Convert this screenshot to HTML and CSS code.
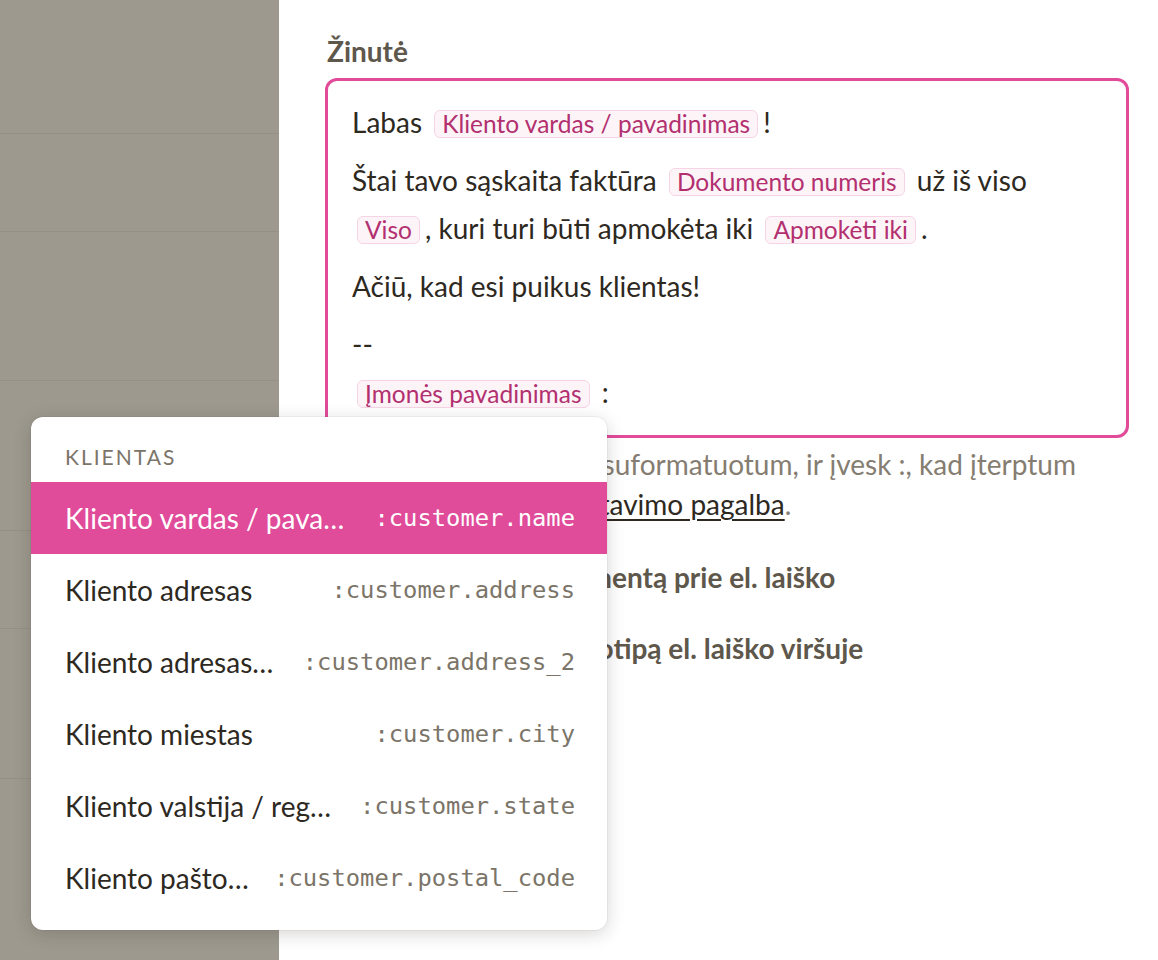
FILE: index.html
```html
<!DOCTYPE html>
<html lang="lt">
<head>
<meta charset="utf-8">
<title>Žinutė</title>
<link rel="stylesheet" href="styles.css">
</head>
<body>
<div class="app">
  <aside class="sidebar">
    <div class="side-row r1"></div>
    <div class="side-row r2"></div>
    <div class="side-row r3"></div>
    <div class="side-row r4"></div>
    <div class="side-row r5"></div>
    <div class="side-row r6"></div>
    <div class="side-row r7"></div>
  </aside>
  <main class="content">
    <h2 class="field-label">Žinutė</h2>
    <div class="editor">
      <p>Labas <span class="tok">Kliento vardas / pavadinimas</span>!</p>
      <p>Štai tavo sąskaita faktūra <span class="tok">Dokumento numeris</span> už iš viso <span class="tok">Viso</span>, kuri turi būti apmokėta iki <span class="tok">Apmokėti iki</span>.</p>
      <p>Ačiū, kad esi puikus klientas!</p>
      <p>--<br><span class="tok">Įmonės pavadinimas</span> :</p>
    </div>
    <p class="help">Rašyk Markdown, kad suformatuotum, ir įvesk :, kad įterptum laukus. Daugiau <a href="#" class="help-link">formatavimo pagalba</a>.</p>
    <label class="check"><span class="box"></span><span>Pridėti PDF dokumentą prie el. laiško</span></label>
    <label class="check"><span class="box"></span><span>Rodyti įmonės logotipą el. laiško viršuje</span></label>
  </main>
</div>

<div class="menu">
  <div class="menu-head">Klientas</div>
  <div class="menu-item active"><span class="mi-label">Kliento vardas / pavadinimas</span><span class="mi-code">:customer.name</span></div>
  <div class="menu-item"><span class="mi-label">Kliento adresas</span><span class="mi-code">:customer.address</span></div>
  <div class="menu-item"><span class="mi-label">Kliento adresas, 2 eilutė</span><span class="mi-code">:customer.address_2</span></div>
  <div class="menu-item"><span class="mi-label">Kliento miestas</span><span class="mi-code">:customer.city</span></div>
  <div class="menu-item"><span class="mi-label">Kliento valstija / regionas</span><span class="mi-code">:customer.state</span></div>
  <div class="menu-item"><span class="mi-label">Kliento pašto kodas</span><span class="mi-code">:customer.postal_code</span></div>
</div>
</body>
</html>
```
FILE: styles.css
```css
* { box-sizing: border-box; }
html, body { margin: 0; padding: 0; }
body {
  font-family: Lato, "Noto Sans", sans-serif;
  color: #2e291f;
  background: #fff;
  width: 1158px;
  height: 960px;
  overflow: hidden;
  position: relative;
}
.app {
  display: flex;
  height: 960px;
}
.sidebar {
  width: 279px;
  flex: none;
  background: #9d998e;
  display: flex;
  flex-direction: column;
}
.side-row { border-bottom: 1px solid #959085; flex: none; }
.r1 { height: 134px; }
.r2 { height: 98px; }
.r3 { height: 149px; }
.r4 { height: 150px; }
.r5 { height: 98px; }
.r6 { height: 150px; }
.r7 { flex: 1; border-bottom: 0; }

.content {
  flex: 1;
  padding: 34px 29px 0 46px;
}
.field-label {
  margin: 0 0 10px 2px;
  font-size: 28px;
  line-height: 34px;
  font-weight: 700;
  color: #5e574b;
}
.editor {
  border: 3px solid #e14b9a;
  border-radius: 12px;
  padding: 17px 20px 19px 24px;
  font-size: 28px;
}
.editor p {
  margin: 0 0 10px;
  line-height: 48px;
}
.editor p:last-child { margin-bottom: 0; }
.tok {
  display: inline-block;
  line-height: 26px;
  padding: 0 7px;
  margin: 0 5px;
  font-size: 24.5px;
  color: #b2306f;
  background: #fdf4f8;
  border: 1px solid #f6d4e5;
  border-radius: 6px;
}

.help {
  margin: 6px 0 0 2px;
  font-size: 28px;
  line-height: 40px;
  color: #857d71;
}
.help-link { color: #2e291f; text-decoration: underline; text-underline-offset: 4px; text-decoration-thickness: 1.5px; }

.check {
  display: flex;
  align-items: center;
  gap: 20px;
  margin: 35px 0 0 2px;
  font-size: 28px;
  line-height: 36px;
  font-weight: 700;
  color: #5e574b;
}
.check + .check { margin-top: 35px; }
.box {
  width: 28px;
  height: 28px;
  border: 2px solid #cbc6bc;
  border-radius: 6px;
  background: #fff;
  flex: none;
}

.menu {
  position: absolute;
  left: 31px;
  top: 417px;
  width: 576px;
  background: #fff;
  border-radius: 12px;
  box-shadow: 0 0 0 1px rgba(0,0,0,0.04), 0 4px 18px rgba(40,30,20,0.18);
  padding: 0 0 16px;
}
.menu-head {
  height: 65px;
  padding: 27px 34px 0;
  font-size: 21px;
  line-height: 26px;
  letter-spacing: 2px;
  text-transform: uppercase;
  color: #7b7468;
}
.menu-item {
  display: flex;
  align-items: center;
  gap: 25px;
  height: 72px;
  padding: 0 32px 0 34px;
}
.menu-item.active { background: #e04b9a; color: #fff; }
.mi-label {
  flex: 1;
  min-width: 0;
  font-size: 28px;
  white-space: nowrap;
  overflow: hidden;
  text-overflow: ellipsis;
}
.mi-code {
  flex: none;
  font-family: "DejaVu Sans Mono", monospace;
  font-size: 23.8px;
  color: #7b7468;
}
.menu-item.active .mi-code { color: #fff; }
```
